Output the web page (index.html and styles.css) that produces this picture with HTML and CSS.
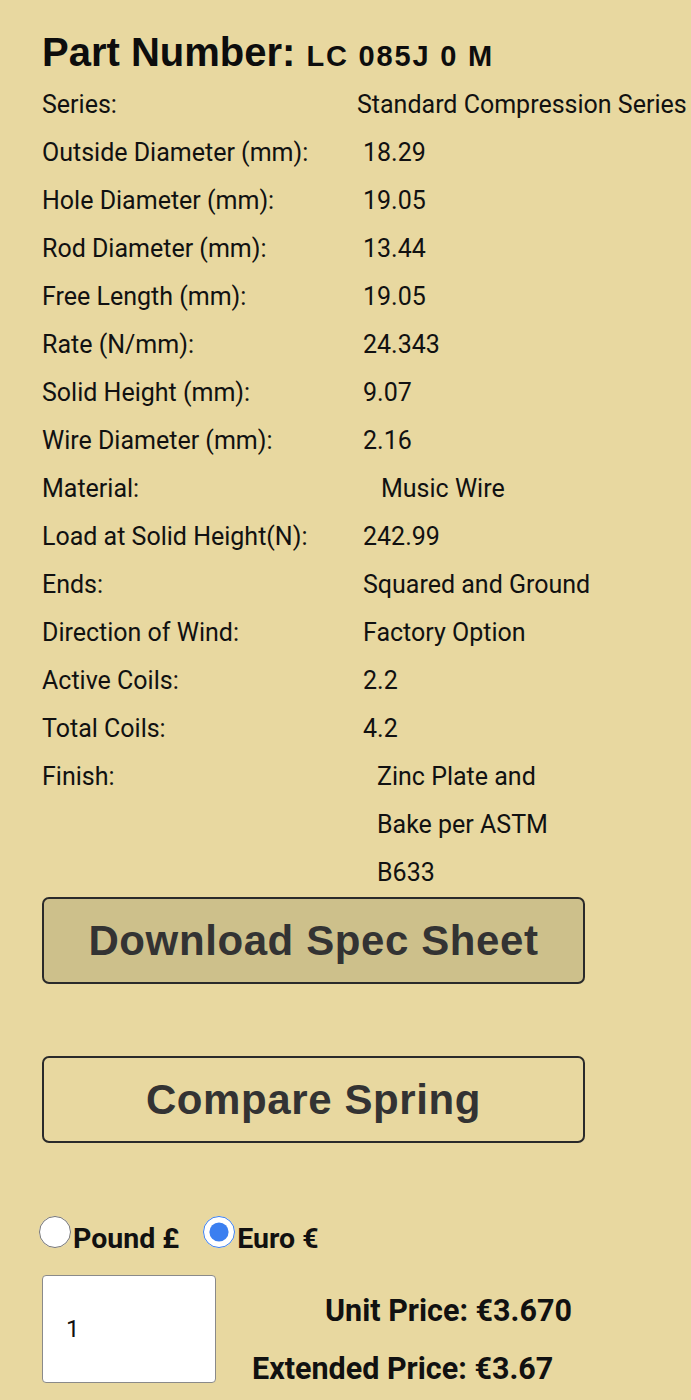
FILE: index.html
```html
<!DOCTYPE html>
<html lang="en">
<head>
<meta charset="utf-8">
<title>Part LC 085J 0 M</title>
<link rel="stylesheet" href="styles.css">
</head>
<body>
<main class="page">
  <h1 class="title">Part Number: <span class="part-no">LC 085J 0 M</span></h1>
  <dl class="specs">
    <div class="row"><dt>Series:</dt><dd class="v-series">Standard Compression Series</dd></div>
    <div class="row"><dt>Outside Diameter (mm):</dt><dd>18.29</dd></div>
    <div class="row"><dt>Hole Diameter (mm):</dt><dd>19.05</dd></div>
    <div class="row"><dt>Rod Diameter (mm):</dt><dd>13.44</dd></div>
    <div class="row"><dt>Free Length (mm):</dt><dd>19.05</dd></div>
    <div class="row"><dt>Rate (N/mm):</dt><dd>24.343</dd></div>
    <div class="row"><dt>Solid Height (mm):</dt><dd>9.07</dd></div>
    <div class="row"><dt>Wire Diameter (mm):</dt><dd>2.16</dd></div>
    <div class="row"><dt>Material:</dt><dd class="v-material">Music Wire</dd></div>
    <div class="row"><dt>Load at Solid Height(N):</dt><dd>242.99</dd></div>
    <div class="row"><dt>Ends:</dt><dd>Squared and Ground</dd></div>
    <div class="row"><dt>Direction of Wind:</dt><dd>Factory Option</dd></div>
    <div class="row"><dt>Active Coils:</dt><dd>2.2</dd></div>
    <div class="row"><dt>Total Coils:</dt><dd>4.2</dd></div>
    <div class="row"><dt>Finish:</dt><dd class="v-finish">Zinc Plate and Bake per ASTM B633</dd></div>
  </dl>
  <button class="btn btn-download" type="button">Download Spec Sheet</button>
  <button class="btn btn-compare" type="button">Compare Spring</button>
  <div class="currency">
    <label class="cur-opt"><input type="radio" name="cur" class="radio"><span class="cur-text">Pound £</span></label>
    <label class="cur-opt"><input type="radio" name="cur" class="radio" checked><span class="cur-text">Euro €</span></label>
  </div>
  <div class="order">
    <input class="qty" type="text" value="1">
    <div class="prices">
      <div class="price price-unit">Unit Price: €3.670</div>
      <div class="price price-ext">Extended Price: €3.67</div>
    </div>
  </div>
</main>
</body>
</html>
```
FILE: styles.css
```css
html, body {
  margin: 0;
  padding: 0;
  background: #e8d8a0;
}
body {
  font-family: Roboto, "Liberation Sans", sans-serif;
  color: #111;
  overflow-x: hidden;
}
.page {
  padding: 28px 0 40px 42px;
}
.title {
  margin: 0;
  font-family: "Liberation Sans", Arial, sans-serif;
  font-weight: bold;
  font-size: 40px;
  line-height: 48px;
  color: #0d0d0d;
  white-space: nowrap;
}
.part-no {
  font-size: 29px;
  letter-spacing: 1.8px;
}
.specs {
  margin: 1px 0 0 0;
  font-size: 25px;
  line-height: 48px;
}
.row {
  display: grid;
  grid-template-columns: 315px 1fr;
}
.row dt {
  margin: 0;
  white-space: nowrap;
}
.row dd {
  margin: 0;
  padding-left: 6px;
  white-space: nowrap;
}
.row dd.v-series { padding-left: 0; }
.row dd.v-material { padding-left: 24px; }
.row dd.v-finish {
  padding-left: 20px;
  white-space: normal;
  max-width: 190px;
}
.btn {
  display: flex;
  align-items: center;
  justify-content: center;
  box-sizing: border-box;
  width: 543px;
  height: 87px;
  border: 2px solid #2a2a2a;
  border-radius: 7px;
  font-family: "Liberation Sans", Arial, sans-serif;
  font-weight: bold;
  font-size: 42px;
  letter-spacing: 0.6px;
  color: #333;
  padding: 0;
}
.btn-download {
  margin-top: 0;
  background: #cdc08b;
}
.btn-compare {
  margin-top: 72px;
  background: transparent;
}
.currency {
  display: flex;
  align-items: flex-end;
  gap: 24px;
  margin: 73px 0 0 -3px;
}
.cur-opt {
  display: flex;
  align-items: flex-end;
}
.radio {
  width: 32px;
  height: 32px;
  margin: 0 2px 0 0;
  accent-color: #3b7ff0;
}
.cur-text {
  font-weight: bold;
  font-size: 28.5px;
  line-height: 28px;
  margin-bottom: -5px;
}
.order {
  display: flex;
  align-items: flex-start;
  margin-top: 27px;
}
.qty {
  box-sizing: border-box;
  width: 174px;
  height: 108px;
  margin: 0;
  border: 1.5px solid #8a8a8a;
  border-radius: 4px;
  background: #fff;
  padding: 0 0 0 23px;
  font-family: Roboto, sans-serif;
  font-size: 24px;
  color: #111;
}
.prices {
  display: flex;
  flex-direction: column;
  margin-top: 7px;
  font-weight: bold;
  font-size: 30.5px;
  line-height: 58px;
  white-space: nowrap;
}
.price-unit { margin-left: 109px; }
.price-ext { margin-left: 36px; }
```
